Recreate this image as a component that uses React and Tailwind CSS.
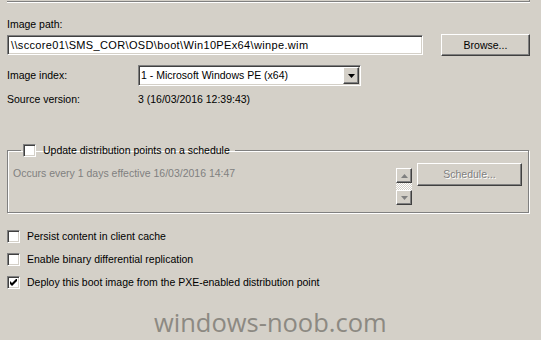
import React from 'react';

const sunken =
  'bg-white border border-t-[#808080] border-l-[#808080] border-b-white border-r-white shadow-[inset_1px_1px_0_#404040,inset_-1px_-1px_0_#d4d0c8]';
const raised =
  'bg-[#d4d0c8] border border-t-white border-l-white border-b-[#404040] border-r-[#404040] shadow-[inset_-1px_-1px_0_#808080]';

const Check = ({ checked }) => (
  <span className={`w-[13px] h-[13px] shrink-0 flex items-center justify-center ${sunken}`}>
    {checked && (
      <svg width="7" height="7" viewBox="0 0 7 7">
        <polygon points="0,2 2,4 7,-1 7,2 2,7 0,5" fill="#000" />
      </svg>
    )}
  </span>
);

const Arrow = ({ up, color = '#000', w = 7, h = 4 }) => (
  <svg width={w} height={h} viewBox={`0 0 ${w} ${h}`}>
    <polygon points={up ? `0,${h} ${w},${h} ${w / 2},0` : `0,0 ${w},0 ${w / 2},${h}`} fill={color} />
  </svg>
);

const CheckRow = ({ checked, label, className = '' }) => (
  <div className={`flex items-center gap-[7px] h-[13px] ${className}`}>
    <Check checked={checked} />
    <span>{label}</span>
  </div>
);

export default function App() {
  return (
    <div className="w-[541px] h-[340px] bg-[#d4d0c8] relative overflow-hidden text-[10.5px] leading-[13px] text-black font-['Liberation_Sans',Arial,sans-serif]">
      <div className="px-[7px]">
        {/* bottom edge of the panel above */}
        <div className="w-[523px] h-[2px] border-b border-r border-[#808080] shadow-[0_1px_0_#fff]" />

        <div className="mt-[16px]">Image path:</div>
        <div className="mt-[3px] h-[22px] flex items-center gap-[18px]">
          <div className={`w-[416px] h-[20px] flex items-center pl-[3px] text-[11px] tracking-[0.35px] ${sunken}`}>
            \\sccore01\SMS_COR\OSD\boot\Win10PEx64\winpe.wim
          </div>
          <button className={`w-[89px] h-[22px] flex items-center justify-center ${raised}`}>
            Browse...
          </button>
        </div>

        <div className="mt-[9px] h-[21px] flex items-center">
          <span className="w-[131px]">Image index:</span>
          <div className={`w-[223px] h-[21px] flex items-center ${sunken}`}>
            <span className="flex-1 pl-[2px]">1 - Microsoft Windows PE (x64)</span>
            <span className={`w-[16px] h-[17px] mr-[1px] flex items-center justify-center ${raised}`}>
              <Arrow />
            </span>
          </div>
        </div>

        <div className="mt-[7px] h-[13px] flex items-center">
          <span className="w-[131px]">Source version:</span>
          <span>3 (16/03/2016 12:39:43)</span>
        </div>

        <fieldset className="mt-[38px] w-[522px] h-[69px] border border-[#808080] shadow-[inset_1px_1px_0_#fff,1px_1px_0_#fff]">
          <legend className="ml-[13px] pl-[2px] pr-[5px] h-[13px] flex items-center gap-[7px]">
            <Check />
            <span>Update distribution points on a schedule</span>
          </legend>
          <div className="flex items-start pl-[5px] pr-[6px]">
            <div className="flex-1 mt-[10px] text-[#808080]">
              Occurs every 1 days effective 16/03/2016 14:47
            </div>
            <div className="mt-[11px] w-[16px] flex flex-col">
              <span className={`h-[15px] flex items-center justify-center ${raised}`}>
                <Arrow up color="#808080" />
              </span>
              <span className="h-[7px] bg-[repeating-conic-gradient(#fff_0%_25%,#d4d0c8_0%_50%)] bg-size-[2px_2px]" />
              <span className={`h-[15px] flex items-center justify-center ${raised}`}>
                <Arrow color="#808080" />
              </span>
            </div>
            <button
              className={`ml-[5px] mt-[6px] w-[105px] h-[23px] flex items-center justify-center text-[#808080] [text-shadow:1px_1px_0_#fff] ${raised}`}
            >
              Schedule...
            </button>
          </div>
        </fieldset>

        <CheckRow className="mt-[17px]" label="Persist content in client cache" />
        <CheckRow className="mt-[10px]" label="Enable binary differential replication" />
        <CheckRow className="mt-[10px]" checked label="Deploy this boot image from the PXE-enabled distribution point" />
      </div>

      {/* watermark */}
      <div className="absolute left-[154px] top-[310px] text-[25.5px] leading-none text-[#8c8982] font-['Open_Sans',sans-serif]">
        windows-noob.com
      </div>
    </div>
  );
}
